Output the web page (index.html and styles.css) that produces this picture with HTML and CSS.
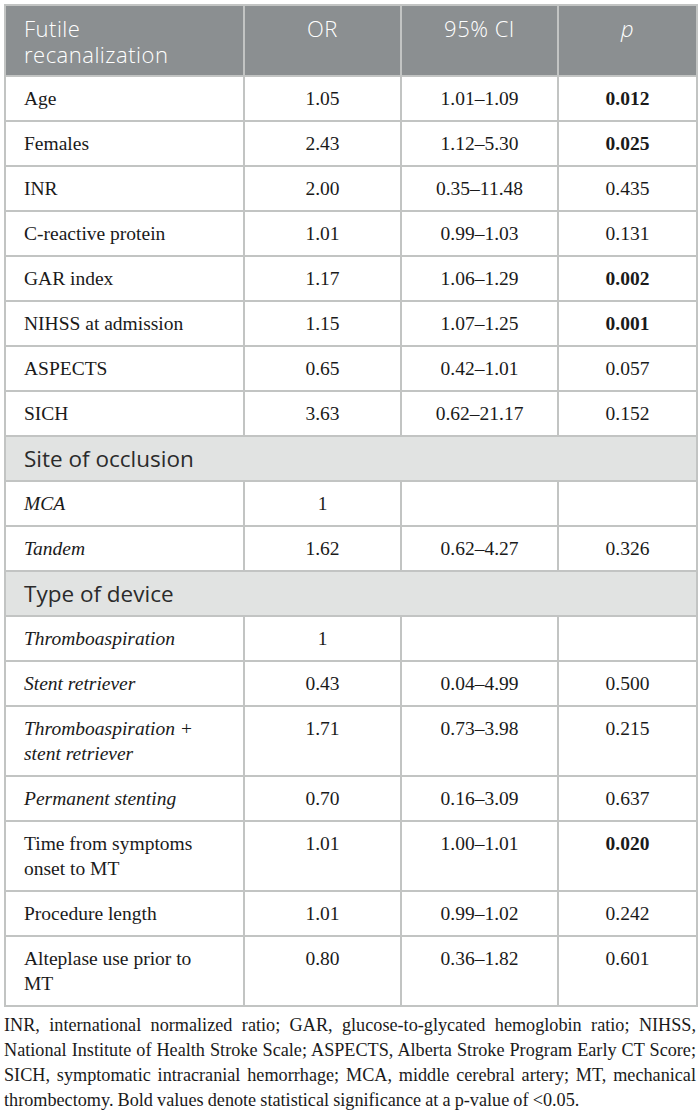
FILE: index.html
```html
<!DOCTYPE html>
<html>
<head>
<meta charset="utf-8">
<link rel="stylesheet" href="styles.css">
</head>
<body>
<div class="wrap">
<table class="tbl">
  <colgroup>
    <col class="c1"><col class="c2"><col class="c3"><col class="c4">
  </colgroup>
  <thead>
    <tr>
      <th class="lft">Futile<br>recanalization</th>
      <th>OR</th>
      <th>95% CI</th>
      <th><i>p</i></th>
    </tr>
  </thead>
  <tbody>
    <tr><td class="lft">Age</td><td>1.05</td><td>1.01–1.09</td><td><b>0.012</b></td></tr>
    <tr><td class="lft">Females</td><td>2.43</td><td>1.12–5.30</td><td><b>0.025</b></td></tr>
    <tr><td class="lft">INR</td><td>2.00</td><td>0.35–11.48</td><td>0.435</td></tr>
    <tr><td class="lft">C-reactive protein</td><td>1.01</td><td>0.99–1.03</td><td>0.131</td></tr>
    <tr><td class="lft">GAR index</td><td>1.17</td><td>1.06–1.29</td><td><b>0.002</b></td></tr>
    <tr><td class="lft">NIHSS at admission</td><td>1.15</td><td>1.07–1.25</td><td><b>0.001</b></td></tr>
    <tr><td class="lft">ASPECTS</td><td>0.65</td><td>0.42–1.01</td><td>0.057</td></tr>
    <tr><td class="lft">SICH</td><td>3.63</td><td>0.62–21.17</td><td>0.152</td></tr>
    <tr class="sec"><td colspan="4">Site of occlusion</td></tr>
    <tr><td class="lft"><i>MCA</i></td><td>1</td><td></td><td></td></tr>
    <tr><td class="lft"><i>Tandem</i></td><td>1.62</td><td>0.62–4.27</td><td>0.326</td></tr>
    <tr class="sec"><td colspan="4">Type of device</td></tr>
    <tr><td class="lft"><i>Thromboaspiration</i></td><td>1</td><td></td><td></td></tr>
    <tr><td class="lft"><i>Stent retriever</i></td><td>0.43</td><td>0.04–4.99</td><td>0.500</td></tr>
    <tr><td class="lft"><i>Thromboaspiration +<br>stent retriever</i></td><td>1.71</td><td>0.73–3.98</td><td>0.215</td></tr>
    <tr><td class="lft"><i>Permanent stenting</i></td><td>0.70</td><td>0.16–3.09</td><td>0.637</td></tr>
    <tr><td class="lft">Time from symptoms<br>onset to MT</td><td>1.01</td><td>1.00–1.01</td><td><b>0.020</b></td></tr>
    <tr><td class="lft">Procedure length</td><td>1.01</td><td>0.99–1.02</td><td>0.242</td></tr>
    <tr><td class="lft">Alteplase use prior to<br>MT</td><td>0.80</td><td>0.36–1.82</td><td>0.601</td></tr>
  </tbody>
</table>
<p class="note">INR, international normalized ratio; GAR, glucose-to-glycated hemoglobin ratio; NIHSS, National Institute of Health Stroke Scale; ASPECTS, Alberta Stroke Program Early CT Score; SICH, symptomatic intracranial hemorrhage; MCA, middle cerebral artery; MT, mechanical thrombectomy. Bold values denote statistical significance at a p-value of &lt;0.05.</p>
</div>
</body>
</html>
```
FILE: styles.css
```css
html, body {
  margin: 0;
  padding: 0;
  background: #ffffff;
}
.wrap {
  padding: 4px 4px 0 4px;
}
.tbl {
  border-collapse: collapse;
  width: 692px;
  table-layout: fixed;
  font-family: "Liberation Serif", "Times New Roman", serif;
  font-size: 19.5px;
  color: #1a1a1a;
}
.c1 { width: 239px; }
.c2 { width: 157px; }
.c3 { width: 157px; }
.c4 { width: 139px; }
.tbl th, .tbl td {
  border: 2px solid #c2c4c3;
  padding: 9px 10px;
  line-height: 25px;
  text-align: center;
  vertical-align: top;
}
.tbl .lft {
  text-align: left;
  padding-left: 18px;
}
.tbl th {
  background: #8b8f91;
  color: #ffffff;
  font-family: "Open Sans", "DejaVu Sans", sans-serif;
  font-weight: 300;
  font-size: 22px;
  letter-spacing: 0.5px;
  line-height: 26px;
  padding-top: 9px;
  padding-bottom: 8px;
}
.tbl b { font-weight: 700; }
.sec td {
  background: #e1e3e2;
  font-family: "Open Sans", "DejaVu Sans", sans-serif;
  font-size: 22.5px;
  color: #2b2b2b;
  text-align: left;
  padding-left: 18px;
}
.note {
  margin: 6px 0 0 0;
  width: 692px;
  font-family: "Liberation Serif", "Times New Roman", serif;
  font-size: 18.2px;
  word-spacing: -0.4px;
  line-height: 25px;
  color: #1a1a1a;
  text-align: justify;
}
```
